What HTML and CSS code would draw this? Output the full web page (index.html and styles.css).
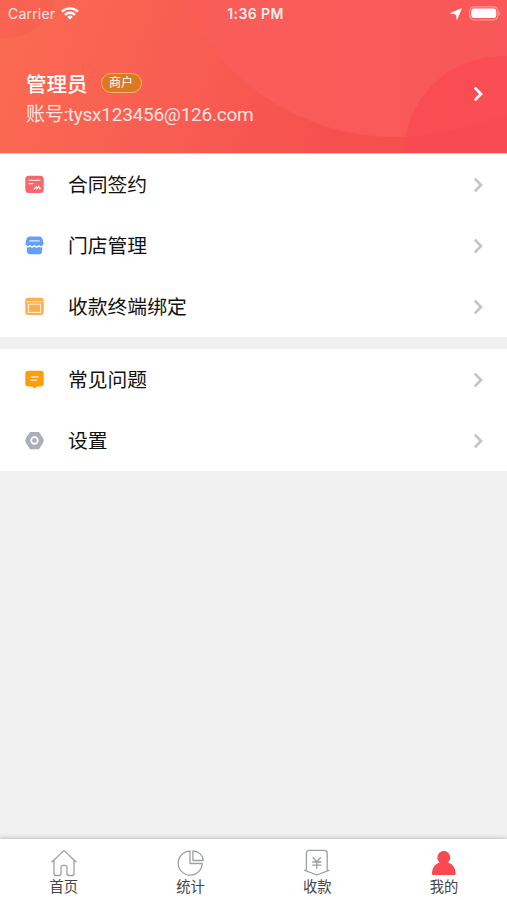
FILE: index.html
```html
<!DOCTYPE html>
<html lang="zh-CN">
<head>
    <meta charset="UTF-8">
    <meta name="viewport" content="width=device-width, initial-scale=1.0">
    <title>我的</title>
    <link rel="stylesheet" href="styles.css">
</head>
<body>
    <div class="app">
        <header class="header">
            <svg class="header-bg" viewBox="0 0 507 153" preserveAspectRatio="none">
                <defs>
                    <linearGradient id="base" gradientUnits="userSpaceOnUse" x1="0" y1="40" x2="330" y2="153">
                        <stop offset="0" stop-color="#fb6a51"/>
                        <stop offset="0.5" stop-color="#f85e52"/>
                        <stop offset="1" stop-color="#f6504e"/>
                    </linearGradient>
                    <linearGradient id="big" x1="0" y1="0" x2="1" y2="0">
                        <stop offset="0" stop-color="#f95e55"/>
                        <stop offset="0.25" stop-color="#fa5c5a"/>
                        <stop offset="1" stop-color="#f85457"/>
                    </linearGradient>
                    <linearGradient id="small" x1="0" y1="0" x2="1" y2="0">
                        <stop offset="0" stop-color="#f84d52"/>
                        <stop offset="0.5" stop-color="#fb4d54"/>
                    </linearGradient>
                </defs>
                <rect width="507" height="153" fill="url(#base)"/>
                <circle cx="5" cy="-15" r="53" fill="#f85c50" opacity="0.5"/>
                <circle cx="395" cy="-93" r="230" fill="url(#big)"/>
                <circle cx="502" cy="154" r="98" fill="url(#small)"/>
                <path d="M404 137 Q460 133 507 113 V153 H404z" fill="#f54b51" opacity="0.55"/>
            </svg>
            <div class="status-bar">
                <div class="status-left">
                    <span>Carrier</span>
                    <svg width="18" height="13" viewBox="0 0 18 13" fill="none" stroke="#fff" stroke-width="2.4">
                        <path d="M1 4.6a11.6 11.6 0 0 1 16 0"/>
                        <path d="M4 7.8a7.2 7.2 0 0 1 10 0"/>
                        <path d="M9 12.6L6.3 9.9a3.9 3.9 0 0 1 5.4 0z" fill="#fff" stroke="none"/>
                    </svg>
                </div>
                <span class="status-time">1:36 PM</span>
                <div class="status-right">
                    <svg width="12" height="12" viewBox="0 0 12 12" fill="#fff" stroke="#fff" stroke-width="0.6" stroke-linejoin="round">
                        <path d="M11.5 0.5L7 11.4L6 6.2L0.5 5.2z"/>
                    </svg>
                    <svg width="32" height="15" viewBox="0 0 32 15">
                        <rect x="0.8" y="0.8" width="28" height="13" rx="4" fill="none" stroke="#fff" stroke-opacity="0.4" stroke-width="1.3"/>
                        <rect x="2.4" y="2.5" width="24.8" height="9.6" rx="2.4" fill="#fff"/>
                        <path d="M30.2 5.2a2.6 2.6 0 0 1 0 4.4z" fill="#fff" opacity="0.45"/>
                    </svg>
                </div>
            </div>
            <div class="profile">
                <div class="profile-info">
                    <div class="profile-name">
                        <span>管理员</span>
                        <span class="badge">商户</span>
                    </div>
                    <div class="profile-account">账号:tysx123456@126.com</div>
                </div>
                <svg class="arrow arrow-light" viewBox="0 0 10 16"><path d="M1.8 1.6L8 8l-6.2 6.4"/></svg>
            </div>
        </header>

        <main class="content">
            <ul class="menu">
                <li class="menu-item">
                    <svg class="menu-icon" viewBox="0 0 19 19">
                        <rect x="0.3" y="0.8" width="18.4" height="17.2" rx="3.5" fill="#fb656c"/>
                        <path d="M3.5 5.3h12M3.5 8.6h5" stroke="#fff" stroke-opacity="0.8" stroke-width="1.3" fill="none"/>
                        <path d="M8.8 14.4l2.6-2.6.6 2 1.7-2.5.8 2.4 1.4-.6" stroke="#fff" stroke-width="1.1" fill="none"/>
                    </svg>
                    <span class="menu-text">合同签约</span>
                    <svg class="arrow" viewBox="0 0 10 16"><path d="M1.8 1.6L8 8l-6.2 6.4"/></svg>
                </li>
                <li class="menu-item">
                    <svg class="menu-icon" viewBox="0 0 19 19">
                        <path d="M4.5.6h10q2 0 2.8 2l1.2 4.4q.2 2-1 3l-.6 6.2q-.3 2-2.4 2h-10q-2.1 0-2.4-2L1.5 10Q.3 9 .5 7l1.2-4.4q.8-2 2.8-2z" fill="#619ff9"/>
                        <path d="M4.3 4.8h10.4" stroke="#fff" stroke-opacity="0.6" stroke-width="1.7"/>
                        <path d="M.5 9.4q2.2 2.6 4.5.4 2.2 2.4 4.5 0 2.2 2.4 4.5 0 2.4 2.2 4.5-.4" stroke="#fff" stroke-width="1.3" fill="none"/>
                    </svg>
                    <span class="menu-text">门店管理</span>
                    <svg class="arrow" viewBox="0 0 10 16"><path d="M1.8 1.6L8 8l-6.2 6.4"/></svg>
                </li>
                <li class="menu-item">
                    <svg class="menu-icon" viewBox="0 0 19 19">
                        <rect x="0.3" y="0.8" width="18.4" height="17.2" rx="3.2" fill="#ffad49"/>
                        <path d="M1.5 4.7h16" stroke="#fff" stroke-opacity="0.7" stroke-width="1.1"/>
                        <rect x="3.4" y="7.2" width="12.2" height="8.2" fill="none" stroke="#fff" stroke-opacity="0.8" stroke-width="1.1"/>
                    </svg>
                    <span class="menu-text">收款终端绑定</span>
                    <svg class="arrow" viewBox="0 0 10 16"><path d="M1.8 1.6L8 8l-6.2 6.4"/></svg>
                </li>
            </ul>

            <ul class="menu">
                <li class="menu-item">
                    <svg class="menu-icon" viewBox="0 0 19 19">
                        <path d="M3.3.8h12.4q3 0 3 3v9.6q0 3-3 3h-3.9L9.5 18.6l-2.3-2.2H3.3q-3 0-3-3V3.8q0-3 3-3z" fill="#ff9c08"/>
                        <path d="M5.6 7h8.2M5.2 10.2h7" stroke="#fff" stroke-opacity="0.85" stroke-width="1.3"/>
                    </svg>
                    <span class="menu-text">常见问题</span>
                    <svg class="arrow" viewBox="0 0 10 16"><path d="M1.8 1.6L8 8l-6.2 6.4"/></svg>
                </li>
                <li class="menu-item">
                    <svg class="menu-icon" viewBox="0 0 19 19">
                        <path d="M5.6 1.8h7.8l3.6 5.2 1 2.5-1 2.5-3.6 5.4H5.6L2 12 1 9.5 2 7z" fill="#abafbc" stroke="#abafbc" stroke-width="1.8" stroke-linejoin="round"/>
                        <circle cx="9.5" cy="9.5" r="3.3" fill="none" stroke="#fff" stroke-width="1.7"/>
                    </svg>
                    <span class="menu-text">设置</span>
                    <svg class="arrow" viewBox="0 0 10 16"><path d="M1.8 1.6L8 8l-6.2 6.4"/></svg>
                </li>
            </ul>
        </main>

        <nav class="tab-bar">
            <a class="tab">
                <svg class="tab-icon" viewBox="0 0 28 28">
                    <path d="M1.7 13.3L13 2.4q1-.9 2 0l11.3 10.9M4 11.5v13q0 2 2 2h3q2 0 2-2v-6.2q0-2 2-2h2q2 0 2 2v6.2q0 2 2 2h3q2 0 2-2v-13"/>
                </svg>
                <span>首页</span>
            </a>
            <a class="tab">
                <svg class="tab-icon" viewBox="0 0 28 28">
                    <path d="M13 2.2a12 12 0 1 0 12.2 12.3H13z"/>
                    <path d="M15.9 1.8v9.7h10.3a10.4 10.4 0 0 0-10.3-9.7z"/>
                </svg>
                <span>统计</span>
            </a>
            <a class="tab">
                <svg class="tab-icon" viewBox="0 0 28 28">
                    <path d="M3.4 21.6V4.2q0-2.8 2.8-2.8h15.2q2.8 0 2.8 2.8v17.4M1.2 21.2l12.6 4.8 12.6-4.8"/>
                    <path d="M9.8 8.2l4 4.6 4-4.6M13.8 12.8v7M9.2 13h9.2M9.2 16.2h9.2"/>
                </svg>
                <span>收款</span>
            </a>
            <a class="tab">
                <svg class="tab-icon active" viewBox="0 0 28 28">
                    <path d="M13.8 2a6.6 6.6 0 0 1 4.2 11.5q7.4 2.4 7.8 10.8.1 1.7-1.4 1.7H3.2Q1.7 26 1.8 24.3q.4-8.4 7.8-10.8A6.6 6.6 0 0 1 13.8 2z"/>
                </svg>
                <span>我的</span>
            </a>
        </nav>
    </div>
</body>
</html>
```

FILE: styles.css
```css
* {
    box-sizing: border-box;
}
body {
    margin: 0;
    font-family: Inter, "Noto Sans CJK SC", sans-serif;
    color: #111;
    background-color: #f0f0f0;
}
.app {
    display: flex;
    flex-direction: column;
    height: 900px;
}
.header {
    position: relative;
    height: 154px;
    color: #fff;
    border-bottom: 1px solid #fdc9c6;
}
.header-bg {
    position: absolute;
    top: 0;
    left: 0;
    width: 100%;
    height: 100%;
    z-index: -1;
}
.status-bar {
    display: grid;
    grid-template-columns: 1fr auto 1fr;
    align-items: center;
    height: 27px;
    padding: 0 6px 0 8px;
    font-size: 14px;
    line-height: 27px;
}
.status-left {
    display: flex;
    align-items: center;
    gap: 6px;
    color: rgba(255, 255, 255, 0.85);
    letter-spacing: 0.2px;
}
.status-time {
    padding-left: 2px;
    font-size: 14px;
    font-weight: 600;
    letter-spacing: 0.4px;
    color: rgba(255, 255, 255, 0.92);
}
.status-right {
    display: flex;
    align-items: center;
    justify-content: flex-end;
    gap: 7px;
}
.profile {
    display: flex;
    align-items: center;
    justify-content: space-between;
    padding: 41px 24px 0 26px;
}
.profile-name {
    display: flex;
    align-items: center;
    gap: 13px;
    height: 30px;
    font-size: 20.5px;
    font-weight: 500;
}
.badge {
    width: 41px;
    height: 20px;
    border: 1px solid #f7b66b;
    border-radius: 10px;
    background-color: #d97a20;
    font-size: 12px;
    font-weight: 400;
    line-height: 18px;
    text-align: center;
}
.profile-account {
    height: 34px;
    font-family: Roboto, "Noto Sans CJK SC", sans-serif;
    font-size: 19px;
    line-height: 34px;
    letter-spacing: -0.25px;
    color: rgba(255, 255, 255, 0.85);
}
.arrow {
    width: 10px;
    height: 16px;
    fill: none;
    stroke: #c4c4c4;
    stroke-width: 2.7;
}
.arrow-light {
    stroke: #fff;
    margin-top: -12px;
}
.content {
    flex: 1;
}
.menu {
    margin: 0 0 12px;
    padding: 0;
    list-style: none;
    background-color: #fff;
}
.menu-item {
    display: flex;
    align-items: center;
    height: 61px;
    padding: 0 24px 0 25px;
}
.menu-icon {
    width: 19px;
    height: 19px;
    margin-right: 24px;
}
.menu-text {
    flex: 1;
    padding-bottom: 2px;
    font-size: 19.8px;
}
.tab-bar {
    display: flex;
    height: 61px;
    background-color: #fff;
    box-shadow: 0 -1px 4px rgba(0, 0, 0, 0.2);
}
.tab {
    flex: 1;
    display: flex;
    flex-direction: column;
    align-items: center;
    padding: 10px 0 0 1px;
    font-size: 14.3px;
    line-height: 20px;
    color: #444;
}
.tab-icon {
    width: 28px;
    height: 28px;
    fill: none;
    stroke: #9a9fa6;
    stroke-width: 1.3;
    stroke-linejoin: round;
}
.tab-icon.active {
    fill: #f84a50;
    stroke: none;
}
```
